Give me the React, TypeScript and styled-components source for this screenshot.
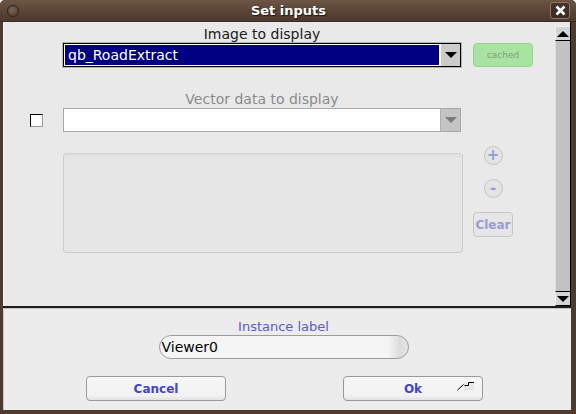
import React from "react";
import styled, { createGlobalStyle } from "styled-components";

const Global = createGlobalStyle`
  html, body { margin: 0; padding: 0; background: #ffffff; }
  body { font-family: "DejaVu Sans", "Liberation Sans", sans-serif; }
  * { box-sizing: border-box; }
`;

const Frame = styled.div`
  width: 576px;
  height: 414px;
  display: flex;
  flex-direction: column;
  background: #4e3a2f;
  border-radius: 5px 5px 0 0;
  overflow: hidden;
`;

const TitleBar = styled.div`
  height: 22px;
  flex: none;
  display: flex;
  align-items: center;
  justify-content: space-between;
  padding: 0 6px 0 7px;
  background: linear-gradient(#6d5645, #5a4537 50%, #4d392e);
  border-bottom: 1px solid #3b2b22;
`;

const TitleDot = styled.div`
  width: 12px;
  height: 12px;
  border-radius: 50%;
  border: 1px solid #2e221b;
  background: radial-gradient(circle at 40% 35%, #7a6555, #4a372c);
`;

const TitleText = styled.div`
  color: #ffffff;
  font-weight: bold;
  font-size: 13px;
  text-shadow: 1px 1px 1px #1e140e;
  margin-left: 8px;
`;

const CloseButton = styled.div`
  width: 20px;
  height: 17px;
  border: 1px solid #8a7567;
  border-radius: 3px;
  background: linear-gradient(#463429, #3a2b22);
  display: flex;
  align-items: center;
  justify-content: center;
`;

const Body = styled.div`
  height: 284px;
  flex: none;
  display: flex;
  padding-left: 3px;
  padding-right: 5px;
  background: #4e3a2f;
`;

const Content = styled.div`
  flex: 1;
  background: #e9e9e9;
  border-left: 1px solid #f4f4f4;
  padding-top: 4px;
  display: flex;
  flex-direction: column;
`;

const CenterLabel = styled.div<{ $dim?: boolean }>`
  height: 16px;
  line-height: 16px;
  font-size: 14px;
  text-align: center;
  color: ${(p) => (p.$dim ? "#8a8a8a" : "#1a1a1a")};
  padding-right: 35px;
`;

const Row = styled.div<{ $top: number }>`
  display: flex;
  align-items: flex-start;
  margin-top: ${(p) => p.$top}px;
`;

const LeftSlot = styled.div`
  width: 59px;
  height: 24px;
  display: flex;
  align-items: center;
  padding-left: 26px;
`;

const Checkbox = styled.div`
  width: 13px;
  height: 13px;
  background: #ffffff;
  border: 1px solid #000000;
  border-right-color: #9a9a9a;
  border-bottom-color: #9a9a9a;
`;

const Combo = styled.div<{ $active?: boolean }>`
  width: 398px;
  height: 24px;
  display: flex;
  border: 1px solid ${(p) => (p.$active ? "#000000" : "#a8a8a8")};
  box-shadow: ${(p) => (p.$active ? "0 0 0 1px #b4b4b4" : "none")};
  background: #ffffff;
`;

const ComboField = styled.div<{ $active?: boolean }>`
  flex: 1;
  background: ${(p) => (p.$active ? "#000080" : "#ffffff")};
  border: 1px solid #ffffff;
  color: #ffffff;
  font-size: 14px;
  line-height: 20px;
  padding-left: 3px;
`;

const ComboArrow = styled.div<{ $active?: boolean }>`
  width: 20px;
  background: ${(p) => (p.$active ? "#cbcbcb" : "#c4c4c4")};
  border-left: 1px solid ${(p) => (p.$active ? "#ffffff" : "#b0b0b0")};
  display: flex;
  align-items: center;
  justify-content: center;
`;

const Triangle = styled.div<{ $color: string; $up?: boolean }>`
  width: 0;
  height: 0;
  border-left: 6px solid transparent;
  border-right: 6px solid transparent;
  ${(p) =>
    p.$up
      ? `border-bottom: 6px solid ${p.$color};`
      : `border-top: 6px solid ${p.$color};`}
`;

const CachedButton = styled.div`
  margin-left: 12px;
  width: 60px;
  height: 24px;
  border-radius: 4px;
  background: #a9e3a1;
  border: 1px solid #93d48b;
  color: #7f9e7c;
  font-size: 9px;
  display: flex;
  align-items: center;
  justify-content: center;
`;

const ListBox = styled.div`
  margin-top: 7px;
  width: 400px;
  height: 100px;
  border: 1px solid #cdcdcd;
  border-top-color: #d2d2d2;
  border-radius: 4px;
  background: linear-gradient(#dedede, #e6e6e6 4px, #e6e6e6);
`;

const SideColumn = styled.div`
  margin-left: 10px;
  width: 40px;
  display: flex;
  flex-direction: column;
  align-items: center;
  gap: 14px;
`;

const RoundButton = styled.div`
  width: 19px;
  height: 19px;
  border-radius: 50%;
  border: 1px solid #c4c4c4;
  background: #e4e4e4;
  color: #9a9ad6;
  font-size: 15px;
  line-height: 16px;
  text-align: center;
  font-weight: bold;
`;

const ClearButton = styled.div`
  width: 40px;
  height: 25px;
  border: 1px solid #c6c6c6;
  border-radius: 4px;
  background: #e6e6e6;
  color: #9a9ad6;
  font-size: 12px;
  font-weight: bold;
  display: flex;
  align-items: center;
  justify-content: center;
`;

const ScrollBar = styled.div`
  width: 16px;
  display: flex;
  flex-direction: column;
  padding-top: 4px;
  background: #e9e9e9;
  border-right: 1px solid #000000;
`;

const ScrollButton = styled.div<{ $bottom?: boolean }>`
  height: 15px;
  flex: none;
  background: #d4d4d4;
  border-top: 1px solid ${(p) => (p.$bottom ? "#000000" : "#f0f0f0")};
  border-bottom: 1px solid #000000;
  border-left: 1px solid #f0f0f0;
  display: flex;
  align-items: center;
  justify-content: center;
`;

const Trough = styled.div`
  flex: 1;
  background: #c2c2c2;
  border-left: 1px solid #dcdcdc;
`;

const Separator = styled.div`
  height: 2px;
  flex: none;
  margin: 0 5px 0 3px;
  background: #1c1c1c;
`;

const BottomPanel = styled.div`
  height: 102px;
  flex: none;
  margin: 0 5px 0 3px;
  background: #ececec;
  border-left: 1px solid #c9c9c9;
  border-top: 1px solid #c4c4c4;
  display: flex;
  flex-direction: column;
  padding-top: 10px;
`;

const InstanceLabel = styled.div`
  height: 16px;
  line-height: 16px;
  font-size: 13px;
  color: #5a5ad2;
  text-align: center;
  padding-right: 8px;
`;

const InputRow = styled.div`
  display: flex;
  justify-content: center;
  padding-right: 8px;
`;

const PillInput = styled.div`
  width: 250px;
  height: 24px;
  border: 1px solid #9c9c9c;
  border-radius: 12px;
  background: linear-gradient(90deg, #f5f5f5 0, #f5f5f5 228px, #dcdcdc 240px, #e6e6e6);
  font-size: 14px;
  line-height: 22px;
  color: #000000;
  padding-left: 2px;
`;

const ButtonRow = styled.div`
  display: flex;
  gap: 117px;
  padding-left: 82px;
  margin-top: 17px;
`;

const PushButton = styled.div`
  position: relative;
  width: 140px;
  height: 25px;
  border: 1px solid #9a9a9a;
  border-radius: 4px;
  background: linear-gradient(#f6f6f6, #f2f2f2 80%, #e2e2e2);
  color: #4545c4;
  font-size: 12px;
  font-weight: bold;
  display: flex;
  align-items: center;
  justify-content: center;
`;

const ReturnIcon = styled.svg`
  position: absolute;
  right: 7px;
  top: 5px;
`;

const BottomEdge = styled.div`
  flex: 1;
  background: #4e3a2f;
`;

export default function App() {
  return (
    <>
      <Global />
      <Frame>
        <TitleBar>
          <TitleDot />
          <TitleText>Set inputs</TitleText>
          <CloseButton>
            <svg width="11" height="11" viewBox="0 0 11 11">
              <path d="M1.5 1.5 L9.5 9.5 M9.5 1.5 L1.5 9.5" stroke="#ffffff" strokeWidth="2.6" />
            </svg>
          </CloseButton>
        </TitleBar>
        <Body>
          <Content>
            <CenterLabel>Image to display</CenterLabel>
            <Row $top={1}>
              <LeftSlot />
              <Combo $active>
                <ComboField $active>qb_RoadExtract</ComboField>
                <ComboArrow $active>
                  <Triangle $color="#000000" />
                </ComboArrow>
              </Combo>
              <CachedButton>cached</CachedButton>
            </Row>
            <Row $top={24}>
              <CenterLabel $dim style={{ flex: 1 }}>Vector data to display</CenterLabel>
            </Row>
            <Row $top={1}>
              <LeftSlot>
                <Checkbox />
              </LeftSlot>
              <Combo>
                <ComboField />
                <ComboArrow>
                  <Triangle $color="#7a7a7a" />
                </ComboArrow>
              </Combo>
            </Row>
            <Row $top={14}>
              <LeftSlot />
              <ListBox />
              <SideColumn>
                <RoundButton>+</RoundButton>
                <RoundButton>-</RoundButton>
                <ClearButton>Clear</ClearButton>
              </SideColumn>
            </Row>
          </Content>
          <ScrollBar>
            <ScrollButton>
              <Triangle $color="#000000" $up />
            </ScrollButton>
            <Trough />
            <ScrollButton $bottom>
              <Triangle $color="#000000" />
            </ScrollButton>
          </ScrollBar>
        </Body>
        <Separator />
        <BottomPanel>
          <InstanceLabel>Instance label</InstanceLabel>
          <InputRow>
            <PillInput>Viewer0</PillInput>
          </InputRow>
          <ButtonRow>
            <PushButton>Cancel</PushButton>
            <PushButton>
              Ok
              <ReturnIcon width="18" height="9" viewBox="0 0 18 9">
                <rect x="7" y="0.5" width="10" height="8" fill="#e6e6e6" />
                <path d="M0.5 8 L6.5 2.5" stroke="#000" strokeWidth="1" fill="none" />
                <path d="M7.5 3.5 H11.5 V0.5 H17" stroke="#000" strokeWidth="1" fill="none" />
              </ReturnIcon>
            </PushButton>
          </ButtonRow>
        </BottomPanel>
        <BottomEdge />
      </Frame>
    </>
  );
}
